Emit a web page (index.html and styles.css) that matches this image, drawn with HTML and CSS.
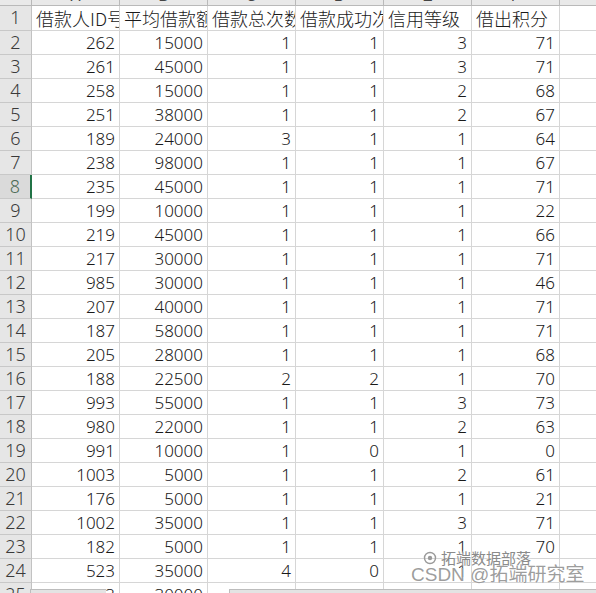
FILE: index.html
```html
<!DOCTYPE html>
<html lang="zh">
<head>
<meta charset="utf-8">
<link rel="stylesheet" href="styles.css">
</head>
<body>
<div class="sheet">
  <div class="grid" id="grid">
    <div class="ch corner"></div>
    <div class="ch"><span>A</span></div>
    <div class="ch"><span>B</span></div>
    <div class="ch"><span>C</span></div>
    <div class="ch"><span>D</span></div>
    <div class="ch"><span>E</span></div>
    <div class="ch"><span>F</span></div>
    <div class="ch"><span>G</span></div>

    <div class="rh first">1</div>
    <div class="c t first">借款人ID号</div>
    <div class="c t first">平均借款额</div>
    <div class="c t first">借款总次数</div>
    <div class="c t first">借款成功次数</div>
    <div class="c t first">信用等级</div>
    <div class="c t first">借出积分</div>
    <div class="c first"></div>
  </div>
  <div class="wm">
    <div class="wm-top"><svg class="wm-icon" width="14" height="14" viewBox="0 0 14 14"><circle cx="7" cy="7" r="5.5" fill="none" stroke="#9a9a9a" stroke-width="1.4"/><circle cx="7" cy="7" r="2.2" fill="#9a9a9a"/></svg><span>拓端数据部落</span></div>
    <div class="wm-main">CSDN @拓端研究室</div>
  </div>
  <div class="bars">
    <div class="bar b1"></div>
    <div class="gap"></div>
    <div class="bar b2"></div>
  </div>
</div>
<script>
const rows = [
[2,262,15000,1,1,3,71],
[3,261,45000,1,1,3,71],
[4,258,15000,1,1,2,68],
[5,251,38000,1,1,2,67],
[6,189,24000,3,1,1,64],
[7,238,98000,1,1,1,67],
[8,235,45000,1,1,1,71],
[9,199,10000,1,1,1,22],
[10,219,45000,1,1,1,66],
[11,217,30000,1,1,1,71],
[12,985,30000,1,1,1,46],
[13,207,40000,1,1,1,71],
[14,187,58000,1,1,1,71],
[15,205,28000,1,1,1,68],
[16,188,22500,2,2,1,70],
[17,993,55000,1,1,3,73],
[18,980,22000,1,1,2,63],
[19,991,10000,1,0,1,0],
[20,1003,5000,1,1,2,61],
[21,176,5000,1,1,1,21],
[22,1002,35000,1,1,3,71],
[23,182,5000,1,1,1,70],
[24,523,35000,4,0,1,''],
[25,1013,30000,1,1,2,70]
];
const g = document.getElementById('grid');
for (const r of rows) {
  const h = document.createElement('div');
  h.className = 'rh' + (r[0] === 8 ? ' sel' : '');
  h.textContent = r[0];
  g.appendChild(h);
  for (let i = 1; i < 7; i++) {
    const c = document.createElement('div');
    c.className = 'c n';
    c.textContent = r[i];
    g.appendChild(c);
  }
  const e = document.createElement('div');
  e.className = 'c';
  g.appendChild(e);
}
</script>
</body>
</html>
```

FILE: styles.css
```css
html, body {
  margin: 0;
  padding: 0;
  background: #ffffff;
}
.sheet {
  position: relative;
  width: 596px;
  height: 593px;
  overflow: hidden;
  font-family: "Noto Sans CJK SC", "Noto Sans", sans-serif;
  color: #111;
}
.grid {
  display: grid;
  grid-template-columns: 32px repeat(7, 88px);
  grid-template-rows: 6px 25px;
  grid-auto-rows: 24px;
}
.ch {
  height: 6px;
  box-sizing: border-box;
  background: #e9e9e9;
  border-right: 1px solid #b9b9b9;
  border-bottom: 1px solid #b9b9b9;
  overflow: hidden;
  text-align: center;
  font-family: "Liberation Sans", sans-serif;
  font-size: 15px;
  color: #444;
}
.ch span {
  display: block;
  line-height: 16px;
  margin-top: -12px;
}
.rh {
  box-sizing: border-box;
  background: #e6e6e6;
  border-right: 1px solid #c2c2c2;
  border-bottom: 1px solid #c8c8c8;
  text-align: center;
  font-family: "Noto Sans", sans-serif;
  font-weight: 300;
  font-size: 18px;
  line-height: 23px;
  color: #3a3a3a;
}
.rh.sel {
  color: #4d6b55;
  background: #dadada;
  border-right: 2px solid #217346;
}
.c {
  box-sizing: border-box;
  border-right: 1px solid #d6d6d6;
  border-bottom: 1px solid #d6d6d6;
  white-space: nowrap;
  overflow: hidden;
  font-size: 17px;
  line-height: 23px;
}
.t {
  padding-left: 4px;
  font-size: 18px;
  font-weight: 300;
  line-height: 24px;
  color: #1a1a1a;
}
.n {
  text-align: right;
  padding-right: 4px;
  font-family: "Noto Sans", sans-serif;
  font-weight: 300;
  font-size: 17px;
  color: #1a1a1a;
}
.wm {
  position: absolute;
  left: 411px;
  top: 550px;
  width: 185px;
}
.wm-top {
  display: flex;
  align-items: center;
  gap: 4px;
  margin-left: 12px;
  font-size: 15px;
  line-height: 15px;
  color: #8a8a8a;
  text-shadow: 0 0 2px #fff, 0 0 2px #fff;
}
.wm-main {
  font-family: "Liberation Sans", "Noto Sans CJK SC", sans-serif;
  font-size: 19px;
  line-height: 20px;
  color: rgba(140, 140, 140, 0.85);
  text-shadow: 0 0 1px #fff;
}
.bars {
  position: absolute;
  left: 30px;
  right: 0;
  top: 589px;
  height: 4px;
  display: flex;
}
.bar {
  background: #e3e3e3;
  border-top: 1px solid #bdbdbd;
  border-left: 1px solid #bdbdbd;
}
.b1 { width: 75px; }
.gap { width: 123px; }
.b2 { flex: 1; }
```
